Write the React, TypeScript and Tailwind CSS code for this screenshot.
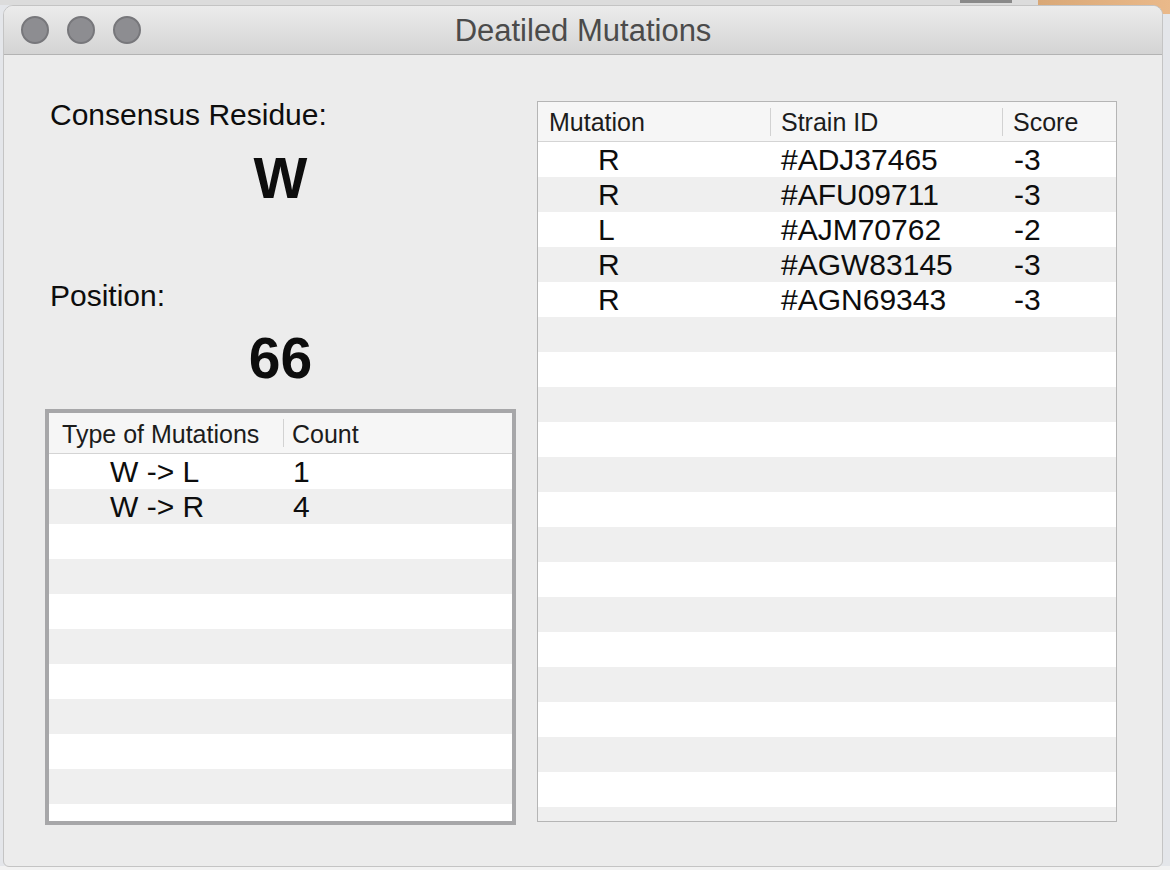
import React from 'react'

const strains = [
  { mutation: 'R', id: '#ADJ37465', score: '-3' },
  { mutation: 'R', id: '#AFU09711', score: '-3' },
  { mutation: 'L', id: '#AJM70762', score: '-2' },
  { mutation: 'R', id: '#AGW83145', score: '-3' },
  { mutation: 'R', id: '#AGN69343', score: '-3' },
]

const types = [
  { type: 'W -> L', count: '1' },
  { type: 'W -> R', count: '4' },
]

function Light() {
  return <div className="h-[28px] w-[28px] rounded-full border-[2px] border-[#77777b] bg-[#8d8d91]" />
}

function HeaderCell({ label, width, sep }: { label: string; width?: string; sep?: boolean }) {
  return (
    <div className={`flex h-full items-center ${width ?? 'flex-1'}`}>
      {sep ? <div className="h-[28px] w-px bg-[#d2d2d2]" /> : null}
      <span className={`pt-[3px] ${sep ? 'pl-[10px]' : 'pl-[11px]'}`}>{label}</span>
    </div>
  )
}

export default function App() {
  const rightRows = Array.from({ length: 21 }, (_, i) => strains[i] ?? null)
  const leftRows = Array.from({ length: 12 }, (_, i) => types[i] ?? null)

  return (
    <div
      className="relative h-[870px] w-[1170px] overflow-hidden bg-[#e4e6ea]"
      style={{ fontFamily: '"Liberation Sans", Arial, Helvetica, sans-serif' }}
    >
      {/* desktop bits behind the window */}
      <div className="absolute left-0 top-0 h-[5px] w-[1040px] bg-[#dcdcdc]" />
      <div className="absolute left-[960px] top-0 h-[3px] w-[52px] bg-[#8a8a8a]" />
      <div className="absolute left-[1038px] top-0 h-[14px] w-[132px] bg-gradient-to-r from-[#d9a877] to-[#eab98a]" />
      <div className="absolute bottom-0 left-0 h-[4px] w-[1170px] bg-[#f2f2f2]" />

      <div className="relative ml-[3px] mt-[5px] flex h-[862px] w-[1160px] flex-col overflow-hidden rounded-b-[6px] rounded-t-[10px] border border-[#c4c4c4] bg-[#ececec] text-[#0d0d0d]">
        {/* title bar */}
        <div className="relative flex h-[49px] shrink-0 items-center gap-[18px] border-b border-[#b3b3b3] bg-gradient-to-b from-[#ececec] to-[#d4d4d4] pl-[17px]">
          <Light />
          <Light />
          <Light />
          <div className="absolute inset-0 flex items-center justify-center pt-[3px] text-[31px] text-[#4b4b4b]">
            Deatiled Mutations
          </div>
        </div>

        {/* content */}
        <div className="flex items-start gap-[21px] pl-[41px] pt-[42px]">
          <div className="flex w-[471px] flex-col">
            <div className="pl-[5px] text-[30px] leading-[36px]">Consensus Residue:</div>
            <div className="mt-[15px] text-center text-[57px] font-bold leading-[60px]">W</div>
            <div className="mt-[70px] pl-[5px] text-[30px] leading-[36px]">Position:</div>
            <div className="mt-[14px] text-center text-[57px] font-bold leading-[60px]">66</div>

            <div className="mt-[21px] flex h-[416px] flex-col overflow-hidden border-[4px] border-[#a7a7a9] bg-white">
              <div className="flex h-[41px] shrink-0 items-center border-b border-[#d4d4d4] bg-[#f6f6f6] text-[25px] text-[#1c1c1c]">
                <div className="flex h-full w-[234px] items-center pl-[13px] pt-[3px]">Type of Mutations</div>
                <div className="flex h-full flex-1 items-center">
                  <div className="h-[28px] w-px bg-[#d2d2d2]" />
                  <span className="pl-[8px] pt-[3px]">Count</span>
                </div>
              </div>
              {leftRows.map((r, i) => (
                <div
                  key={i}
                  className={`flex h-[35px] shrink-0 items-center text-[30px] ${i % 2 === 0 ? 'bg-white' : 'bg-[#efefef]'}`}
                >
                  <div className="w-[234px] pl-[61px]">{r?.type}</div>
                  <div className="flex-1 pl-[10px]">{r?.count}</div>
                </div>
              ))}
            </div>
          </div>

          <div className="mt-[4px] flex h-[721px] w-[580px] flex-col overflow-hidden border border-[#b5b5b5] bg-white">
            <div className="flex h-[40px] shrink-0 items-center border-b border-[#d4d4d4] bg-[#f6f6f6] text-[25px] text-[#1c1c1c]">
              <HeaderCell label="Mutation" width="w-[232px]" />
              <HeaderCell label="Strain ID" width="w-[232px]" sep />
              <HeaderCell label="Score" sep />
            </div>
            {rightRows.map((r, i) => (
              <div
                key={i}
                className={`flex h-[35px] shrink-0 items-center text-[30px] ${i % 2 === 0 ? 'bg-white' : 'bg-[#efefef]'}`}
              >
                <div className="w-[232px] pl-[60px]">{r?.mutation}</div>
                <div className="w-[232px] pl-[11px]">{r?.id}</div>
                <div className="flex-1 pl-[12px]">{r?.score}</div>
              </div>
            ))}
          </div>
        </div>
      </div>
    </div>
  )
}
